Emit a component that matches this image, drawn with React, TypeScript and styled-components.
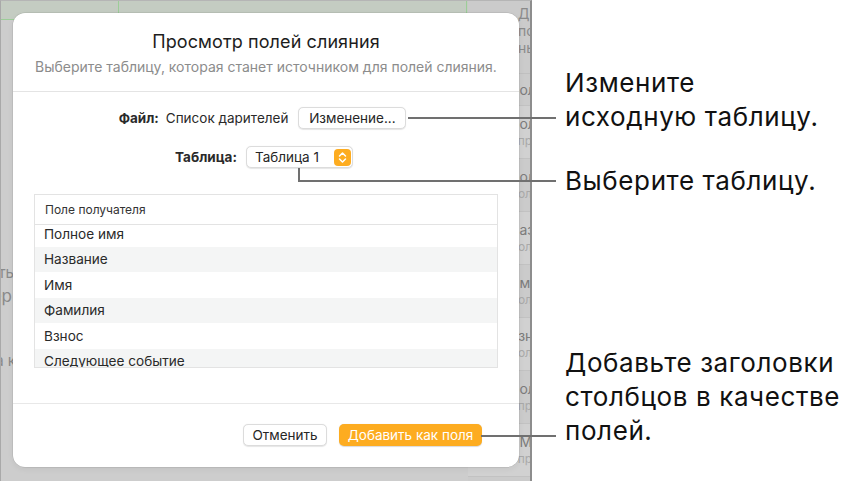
import React from "react";
import styled, { createGlobalStyle } from "styled-components";

const Global = createGlobalStyle`
  html, body { margin: 0; padding: 0; background: #ffffff; }
  body { font-family: Inter, "Noto Sans", "Liberation Sans", sans-serif; -webkit-font-smoothing: antialiased; }
  * { box-sizing: border-box; }
`;

const Page = styled.div`
  position: relative;
  width: 851px;
  height: 481px;
  display: flex;
  overflow: hidden;
  background: #ffffff;
`;

/* ---------- background screen ---------- */
const Screen = styled.div`
  position: relative;
  width: 532px;
  height: 481px;
  flex: none;
  display: flex;
  overflow: hidden;
  background: #cdcdcd;
  border-left: 1px solid #a9a9a9;
  border-top: 1px solid #b5b5b5;
  border-right: 2px solid #8d8d8d;
`;

const MainArea = styled.div`
  flex: 1;
  display: flex;
  flex-direction: column;
  min-width: 0;
`;

const TopStrip = styled.div`
  height: 19px;
  display: flex;
  background: #c4ccc2;
  border-bottom: 1px solid #9ccd98;
`;

const StripCell = styled.div<{ $w: number }>`
  width: ${(p) => p.$w}px;
  flex: none;
  border-right: 1px solid #9ccd98;
`;

const Doc = styled.div`
  display: flex;
  flex-direction: column;
  padding-top: 240px;
  color: #8a8a8a;
`;

const DocLine = styled.div<{ $w: number; $mt: number; $size?: number }>`
  width: ${(p) => p.$w}px;
  margin-top: ${(p) => p.$mt}px;
  overflow: hidden;
  display: flex;
  justify-content: flex-end;
  white-space: nowrap;
  font-size: ${(p) => p.$size ?? 15}px;
  line-height: 20px;
`;

const Sidebar = styled.div`
  width: 62px;
  flex: none;
  display: flex;
  flex-direction: column;
  background: #cbcbcb;
  overflow: hidden;
  white-space: nowrap;
`;

const SideHead = styled.div`
  height: 73px;
  padding: 4px 0 0 50px;
  font-size: 14px;
  line-height: 17px;
  color: #8a8a8a;
  border-bottom: 1px solid #c0c0c0;
`;

const SideItem = styled.div<{ $alt?: boolean; $short?: boolean }>`
  height: ${(p) => (p.$short ? 32 : 53)}px;
  padding: ${(p) => (p.$short ? "8px" : "10px")} 0 0 41px;
  background: ${(p) => (p.$alt ? "#d1d1d1" : "#cbcbcb")};
  border-bottom: 1px solid #c2c2c2;
`;

const SideTitle = styled.div`
  font-size: 14px;
  line-height: 16px;
  color: #7c7c7c;
  overflow: hidden;
`;

const SideSub = styled.div`
  font-size: 12px;
  line-height: 18px;
  color: #a9a9a9;
  overflow: hidden;
`;

/* ---------- dialog ---------- */
const Dialog = styled.div`
  position: absolute;
  left: 12px;
  top: 12px;
  width: 506px;
  height: 454px;
  background: #ffffff;
  border-radius: 12px;
  box-shadow: 0 0 0 0.5px rgba(0, 0, 0, 0.12), 0 2px 6px rgba(0, 0, 0, 0.06);
  display: flex;
  flex-direction: column;
`;

const Header = styled.div`
  padding: 17px 0 15px;
  display: flex;
  flex-direction: column;
  align-items: center;
  gap: 4px;
  border-bottom: 1px solid #e4e4e4;
`;

const Title = styled.div`
  font-size: 18px;
  line-height: 24px;
  color: #1d1d1d;
  letter-spacing: 0.1px;
`;

const Subtitle = styled.div`
  font-size: 14px;
  line-height: 18px;
  color: #8c8c8c;
`;

const Body = styled.div`
  flex: 1;
  display: flex;
  flex-direction: column;
  align-items: center;
  padding-top: 15px;
  border-bottom: 1px solid #e8e8e8;
`;

const FormRow = styled.div<{ $mt?: number; $shift?: number }>`
  display: flex;
  align-items: center;
  margin-top: ${(p) => p.$mt ?? 0}px;
  margin-left: ${(p) => p.$shift ?? 0}px;
  font-size: 13.5px;
  color: #2a2a2a;
`;

const Label = styled.span<{ $gap?: number }>`
  font-weight: 700;
  margin-right: ${(p) => p.$gap ?? 7}px;
`;

const Value = styled.span`
  margin-right: 10px;
`;

const PushButton = styled.button<{ $w: number; $primary?: boolean }>`
  width: ${(p) => p.$w}px;
  height: 22px;
  padding: 0;
  border-radius: 5px;
  border: ${(p) => (p.$primary ? "none" : "1px solid #dcdcdc")};
  background: ${(p) => (p.$primary ? "#fdac20" : "#ffffff")};
  color: ${(p) => (p.$primary ? "#ffffff" : "#262626")};
  box-shadow: ${(p) => (p.$primary ? "0 0.5px 1px rgba(0,0,0,0.15)" : "0 0.5px 1px rgba(0,0,0,0.1)")};
  font-family: inherit;
  font-size: 13.5px;
  display: flex;
  align-items: center;
  justify-content: center;
`;

const Popup = styled.div`
  width: 107px;
  height: 22px;
  border-radius: 5px;
  border: 1px solid #dcdcdc;
  box-shadow: 0 0.5px 1px rgba(0, 0, 0, 0.1);
  background: #fff;
  display: flex;
  align-items: center;
  justify-content: space-between;
  padding: 0 1px 0 8px;
  font-size: 13.5px;
  color: #262626;
`;

const Stepper = styled.div`
  width: 17px;
  height: 17px;
  border-radius: 4px;
  background: #fdac20;
  display: flex;
  align-items: center;
  justify-content: center;
`;

const TableBox = styled.div`
  margin-top: 26px;
  width: 464px;
  height: 174px;
  border: 1px solid #e3e3e3;
  display: flex;
  flex-direction: column;
  overflow: hidden;
`;

const TableHead = styled.div`
  height: 30px;
  flex: none;
  display: flex;
  align-items: center;
  padding-left: 10px;
  font-size: 12px;
  color: #333;
  border-bottom: 1px solid #e3e3e3;
`;

const RowsViewport = styled.div`
  flex: 1;
  overflow: hidden;
`;

const Rows = styled.div`
  margin-top: -4px;
`;

const Row = styled.div<{ $alt: boolean }>`
  height: 25.5px;
  display: flex;
  align-items: center;
  padding-left: 9px;
  font-size: 13.6px;
  color: #2a2a2a;
  background: ${(p) => (p.$alt ? "#f4f5f5" : "#ffffff")};
`;

const Footer = styled.div`
  height: 63px;
  display: flex;
  justify-content: flex-end;
  align-items: flex-start;
  padding: 20px 37px 0 0;
  gap: 12px;
`;

/* ---------- callouts ---------- */
const Callouts = styled.div`
  flex: 1;
  display: flex;
  flex-direction: column;
  padding-left: 33px;
`;

const Callout = styled.div<{ $mt: number }>`
  margin-top: ${(p) => p.$mt}px;
  font-size: 26px;
  line-height: 34px;
  color: #111;
  letter-spacing: 0.6px;
  white-space: nowrap;
`;

const Leaders = styled.svg`
  position: absolute;
  left: 0;
  top: 0;
  pointer-events: none;
`;

const rows = ["Полное имя", "Название", "Имя", "Фамилия", "Взнос", "Следующее событие"];

const side = [
  { t: "Полное имя", s: "" },
  { t: "Полное имя", s: "Справка" },
  { t: "Полное имя", s: "Получатель" },
  { t: "Название", s: "Получатель" },
  { t: "Имя", s: "Получатель" },
  { t: "Взнос", s: "Получатель" },
  { t: "Полное", s: "Справка" },
  { t: "ЙМ", s: "Справка" },
];

export default function App() {
  return (
    <Page>
      <Global />
      <Screen>
        <MainArea>
          <TopStrip>
            <StripCell $w={118} />
            <StripCell $w={348} />
          </TopStrip>
          <Doc>
            <DocLine $w={13} $mt={3}>добавить</DocLine>
            <DocLine $w={11} $mt={3} $size={17}>пример</DocLine>
            <DocLine $w={15} $mt={45}>нажмите на к</DocLine>
          </Doc>
        </MainArea>
        <Sidebar>
          <SideHead>
            <div>Добавить</div>
            <div>поля</div>
            <div>ньше</div>
          </SideHead>
          {side.map((it, i) => (
            <SideItem key={i} $alt={i % 2 === 1} $short={it.s === ""}>
              <SideTitle>{it.t}</SideTitle>
              {it.s && <SideSub>{it.s}</SideSub>}
            </SideItem>
          ))}
        </Sidebar>
        <Dialog>
          <Header>
            <Title>Просмотр полей слияния</Title>
            <Subtitle>Выберите таблицу, которая станет источником для полей слияния.</Subtitle>
          </Header>
          <Body>
            <FormRow $shift={-7}>
              <Label>Файл:</Label>
              <Value>Список дарителей</Value>
              <PushButton $w={108}>Изменение...</PushButton>
            </FormRow>
            <FormRow $mt={17} $shift={-4}>
              <Label $gap={9}>Таблица:</Label>
              <Popup>
                <span>Таблица 1</span>
                <Stepper>
                  <svg width="9" height="13" viewBox="0 0 9 13" fill="none">
                    <path d="M1.5 5 L4.5 2 L7.5 5" stroke="#fff" strokeWidth="1.5" strokeLinecap="round" strokeLinejoin="round" />
                    <path d="M1.5 8 L4.5 11 L7.5 8" stroke="#fff" strokeWidth="1.5" strokeLinecap="round" strokeLinejoin="round" />
                  </svg>
                </Stepper>
              </Popup>
            </FormRow>
            <TableBox>
              <TableHead>Поле получателя</TableHead>
              <RowsViewport>
                <Rows>
                  {rows.map((r, i) => (
                    <Row key={r} $alt={i % 2 === 1}>{r}</Row>
                  ))}
                </Rows>
              </RowsViewport>
            </TableBox>
          </Body>
          <Footer>
            <PushButton $w={84}>Отменить</PushButton>
            <PushButton $w={143} $primary>Добавить как поля</PushButton>
          </Footer>
        </Dialog>
      </Screen>
      <Callouts>
        <Callout $mt={66}>
          Измените
          <br />
          исходную таблицу.
        </Callout>
        <Callout $mt={30}>Выберите таблицу.</Callout>
        <Callout $mt={148}>
          Добавьте заголовки
          <br />
          столбцов в качестве
          <br />
          полей.
        </Callout>
      </Callouts>
      <Leaders width="851" height="481" viewBox="0 0 851 481">
        <g stroke="#707070" strokeWidth="2" fill="none">
          <line x1="408" y1="118" x2="556" y2="118" />
          <polyline points="299,168 299,181 556,181" />
          <line x1="481" y1="436" x2="556" y2="436" />
        </g>
      </Leaders>
    </Page>
  );
}
